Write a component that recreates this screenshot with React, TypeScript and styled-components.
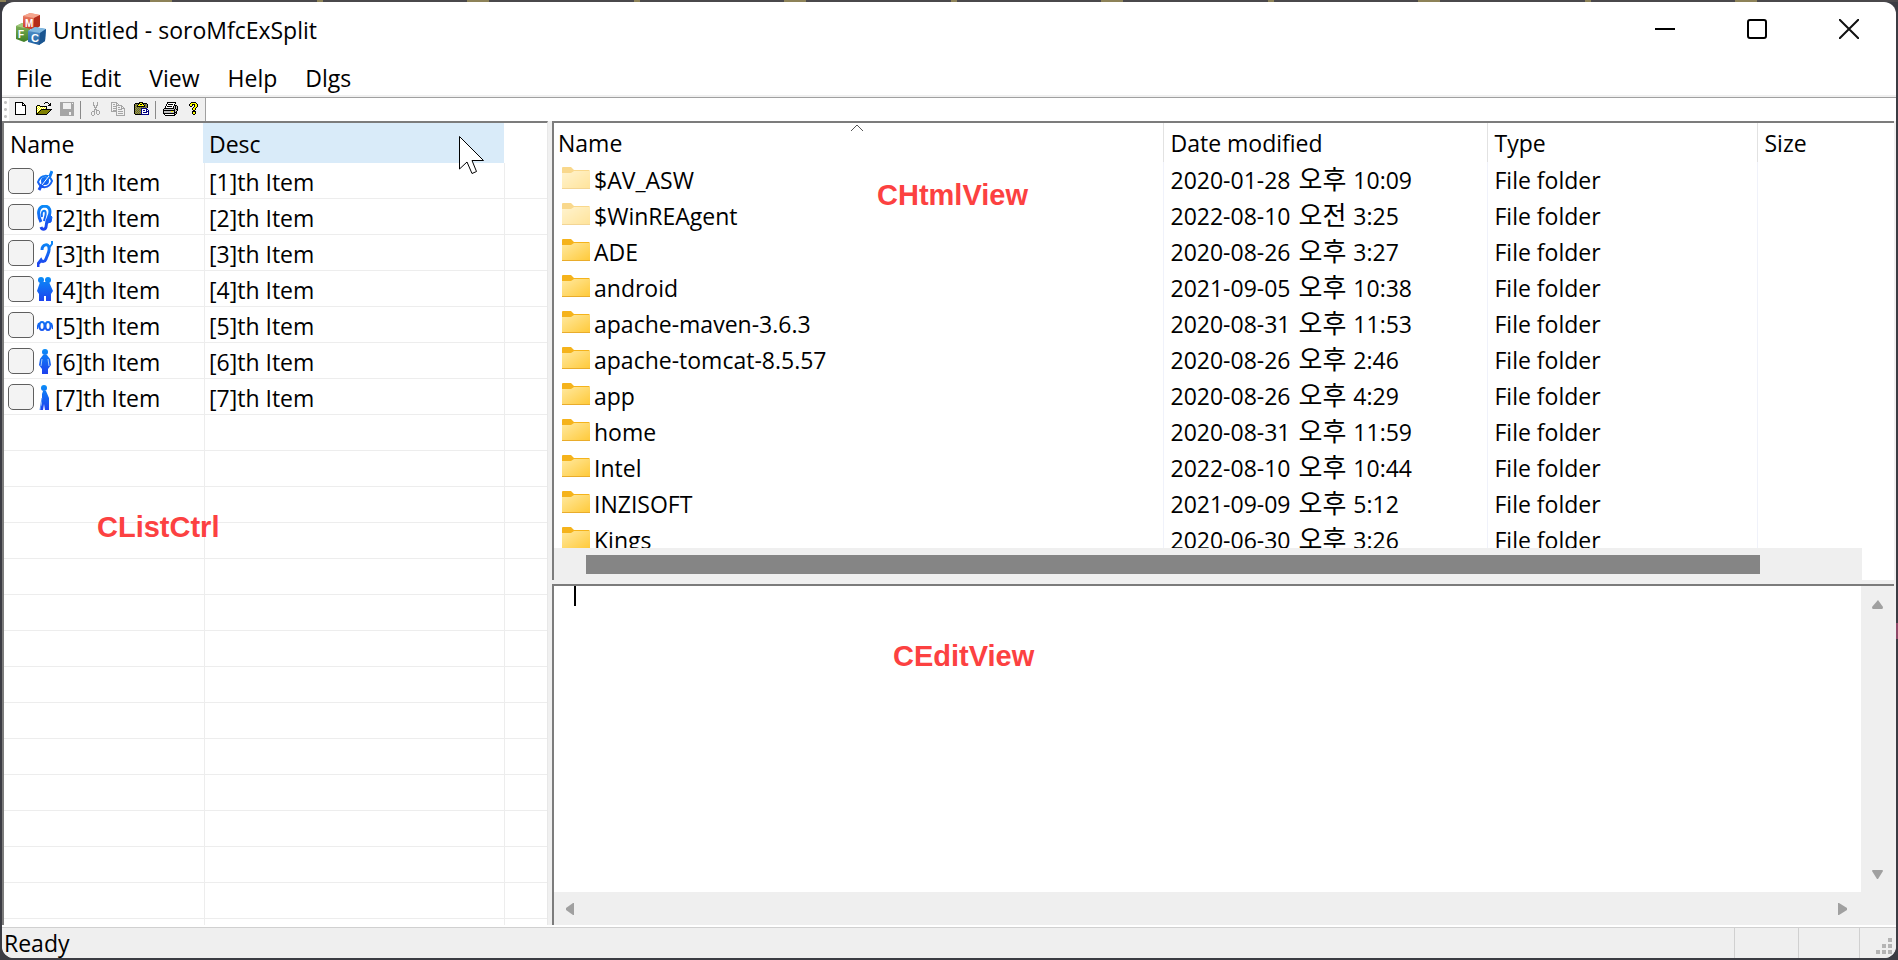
import React from "react";
import styled, { createGlobalStyle } from "styled-components";

const GlobalStyle = createGlobalStyle`
  *, *::before, *::after { box-sizing: border-box; }
  body {
    margin: 0;
    color: #000;
    font: 23px/32px "Open Sans", "Noto Sans CJK KR", sans-serif;
  }
  button, input, textarea { font: inherit; color: inherit; }
`;

/* ---------- window frame ---------- */

const Desktop = styled.div`
  display: flex;
  height: 100vh;
  min-height: 720px;
  padding: 2px;
  background:
    linear-gradient(#8d4a68, #8d4a68) 100% 66% / 2px 16px no-repeat,
    repeating-linear-gradient(90deg, #8d8258 0 6px, #4a484b 6px 150px, #8d8258 150px 172px, #4a484b 172px 317px) 0 0 / 100% 2px no-repeat,
    #3b3c43;
`;

const Window = styled.main`
  flex: 1;
  min-width: 0;
  display: flex;
  flex-direction: column;
  background: #fff;
  border-radius: 12px;
  overflow: hidden;
`;

const TitleBar = styled.header`
  display: flex;
  align-items: center;
  height: 56px;
  padding: 0 1px 0 11px;
`;

const Title = styled.h1`
  flex: 1;
  margin: 0 0 0 4px;
  font-size: 23px;
  font-weight: 400;
`;

const CaptionButton = styled.button`
  display: grid;
  place-items: center;
  width: 92px;
  height: 56px;
  padding: 0 0 2px;
  border: 0;
  background: transparent;
`;

const MenuBar = styled.nav`
  display: flex;
  height: 37px;
  padding: 3px 0 0;
`;

const MenuButton = styled.button`
  padding: 0 14px;
  border: 0;
  background: transparent;
`;

/* ---------- toolbar ---------- */

const ToolBar = styled.div`
  display: flex;
  height: 26px;
  border-top: 2px solid #f0f0f0;
  background: linear-gradient(#a0a0a0, #a0a0a0) 0 0 / 100% 1px no-repeat;
  padding-top: 1px;
`;

const Tools = styled.div`
  display: flex;
  align-items: center;
  border-right: 1px solid #a0a0a0;
  background: #f0f0f0;
`;

const Grip = styled.div`
  align-self: stretch;
  width: 7px;
  background: radial-gradient(circle, #c4c4c4 1px, #fff 2px) 0 1px / 7px 7px;
`;

const ToolButton = styled.button`
  display: grid;
  place-items: center;
  width: 23px;
  height: 22px;
  padding: 0 0 2px;
  border: 0;
  background: transparent;
`;

const ToolSeparator = styled.div`
  width: 1px;
  height: 18px;
  margin: 0 3px 0 2px;
  background: #8a8a8a;
`;

/* ---------- split panes ---------- */

const Split = styled.div`
  flex: 1;
  min-height: 0;
  display: grid;
  grid-template-columns: 546px minmax(0, 1fr);
  column-gap: 4px;
  background: #f0f0f0;
  padding-right: 2px;
`;

const SplitRows = styled.div`
  display: grid;
  grid-template-rows: 459px minmax(0, 1fr);
  row-gap: 4px;
  min-height: 0;
`;

const Pane = styled.section`
  position: relative;
  min-height: 0;
  overflow: hidden;
  background: #fff;
  border-top: 2px solid #7c7c7c;
  border-left: 2px solid #7c7c7c;
`;

const Callout = styled.strong<{ $x: number; $y: number }>`
  position: absolute;
  left: ${(p) => p.$x}px;
  top: ${(p) => p.$y}px;
  color: #fc4141;
  font: 700 29px/32px "Liberation Sans", Arial, sans-serif;
  pointer-events: none;
`;

const ListPane = styled(Pane)`
  display: flex;
  flex-direction: column;
  border-right: 1px solid #e8e8e8;
`;

const ListGrid = styled.div`
  flex: 1;
  background:
    linear-gradient(#ededed, #ededed) 200px 40px / 1px 100% no-repeat,
    linear-gradient(#ededed, #ededed) 500px 40px / 1px 100% no-repeat,
    repeating-linear-gradient(transparent 0 35px, #ededed 35px 36px) 0 40px / 100% 100% no-repeat;
`;

const ListTable = styled.table`
  width: 500px;
  table-layout: fixed;
  border-collapse: collapse;

  th, td { padding: 0; text-align: left; font-weight: 400; white-space: nowrap; }
`;

const ListHead = styled.th<{ $width: number; $hot?: boolean }>`
  width: ${(p) => p.$width}px;
  height: 40px;
  background: ${(p) => (p.$hot ? "#d9ebf9" : "transparent")};

  && { padding: 2px 0 0 6px; }
`;

const ListCell = styled.td`
  height: 36px;
  && { padding: 2px 0 0 6px; }
`;

const ItemLabel = styled.label`
  display: flex;
  align-items: center;
  height: 34px;
  margin-left: -2px;
`;

const Check = styled.input`
  appearance: none;
  width: 26px;
  height: 26px;
  margin: 0 3px 2px 0;
  border: 1px solid #5f5f5f;
  border-radius: 5px;
  background: #f3f3f3;
`;

const ItemText = styled.span`
  margin-left: 2px;
`;

const Pointer = styled.svg`
  position: absolute;
  left: 455px;
  top: 13px;
`;

/* ---------- folder view ---------- */

const FolderPane = styled(Pane)`
  display: flex;
  flex-direction: column;
`;

const FolderScroll = styled.div`
  flex: 1;
  min-height: 0;
  overflow: hidden;
`;

const FolderTable = styled.table`
  width: 100%;
  table-layout: fixed;
  border-collapse: collapse;

  th, td { padding: 0 0 0 7px; text-align: left; font-weight: 400; white-space: nowrap; }
  th { height: 39px; border-right: 1px solid #e2e2e2; }
  td { height: 36px; border-right: 1px solid #f0f2fa; }
  th:first-child { padding-left: 4px; }
  td:first-child { padding-left: 8px; }
  th:last-child, td:last-child { border-right: 0; }
`;

const HeadCell = styled.th<{ $width?: number }>`
  width: ${(p) => (p.$width ? `${p.$width}px` : "auto")};
`;

const FolderName = styled.span`
  display: flex;
  align-items: center;
  gap: 4px;

  svg { margin-bottom: 4px; }
`;

const Meridiem = styled.span`
  margin: 0 1px 0 2px;
  font-size: 26px;
  line-height: 24px;
`;

const SortMark = styled.svg`
  position: absolute;
  left: 296px;
  top: 1px;
`;

const HorizontalBar = styled.div`
  display: flex;
  align-items: center;
  height: 32px;
  margin-right: 32px;
  padding-left: 32px;
  background: #efefef;
`;

const Thumb = styled.div`
  width: 92%;
  height: 19px;
  background: #858585;
`;

/* ---------- edit view ---------- */

const EditPane = styled(Pane)`
  display: grid;
  grid-template-columns: minmax(0, 1fr) 33px;
  grid-template-rows: minmax(0, 1fr) 33px;
  background: #efefef;
`;

const Editor = styled.textarea`
  width: 100%;
  height: 100%;
  padding: 0 20px;
  border: 0;
  outline: 0;
  resize: none;
  background: #fff;
`;

const Caret = styled.span`
  position: absolute;
  left: 20px;
  top: 0;
  width: 2px;
  height: 20px;
  background: #000;
`;

const ScrollTrack = styled.div<{ $vertical?: boolean }>`
  display: flex;
  flex-direction: ${(p) => (p.$vertical ? "column" : "row")};
  justify-content: space-between;
  align-items: center;
  padding: ${(p) => (p.$vertical ? "14px 0 13px" : "0 14px 0 12px")};
`;

const ArrowButton = styled.button`
  display: block;
  padding: 0;
  border: 0;
  background: transparent;
  line-height: 0;
`;

/* ---------- status bar ---------- */

const StatusBar = styled.footer`
  display: flex;
  align-items: stretch;
  height: 33px;
  border-top: 2px solid #fff;
  background: #efefef;
  box-shadow: inset 0 1px #d0d0d0;
`;

const StatusText = styled.span`
  flex: 1;
  padding: 1px 0 0 2px;
  line-height: 30px;
`;

const Indicator = styled.span<{ $width: number }>`
  width: ${(p) => p.$width}px;
  margin-top: 1px;
  border-left: 1px solid #d0d0d0;
`;

const SizeGrip = styled.svg`
  align-self: flex-end;
  margin: 0 4px 4px 0;
`;

/* ---------- drawings ---------- */

const palette: Record<string, string> = {
  K: "#000",
  W: "#fff",
  Y: "#ffff00",
  O: "#808000",
  G: "#a5a5a5",
  D: "#808080",
  S: "#c0c0c0",
  N: "#000080",
};

const PixelIcon = ({ rows }: { rows: string[] }) => (
  <svg width={rows[0].length} height={rows.length} shapeRendering="crispEdges" aria-hidden="true">
    {rows.flatMap((row, y) =>
      [...row].map((c, x) =>
        palette[c] ? <rect key={`${x}-${y}`} x={x} y={y} width="1" height="1" fill={palette[c]} /> : null
      )
    )}
  </svg>
);

const icons = {
  New: [
    "KKKKKKKK...",
    "KWWWWWWKK..",
    "KWWWWWWKWK.",
    "KWWWWWWKKKK",
    "KWWWWWWWWWK",
    "KWWWWWWWWWK",
    "KWWWWWWWWWK",
    "KWWWWWWWWWK",
    "KWWWWWWWWWK",
    "KWWWWWWWWWK",
    "KWWWWWWWWWK",
    "KWWWWWWWWWK",
    "KKKKKKKKKKK",
  ],
  Open: [
    ".........KKK....",
    "........K...K.K.",
    ".............KK.",
    ".KKK........KKK.",
    "KYWYKKKKKKK.....",
    "KWYWYWYWYWK.....",
    "KYWYWYWYWYK.....",
    "KWYWYKKKKKKKKKKK",
    "KYWYKOOOOOOOOOK.",
    "KWYKOOOOOOOOOK..",
    "KYKOOOOOOOOOK...",
    "KKOOOOOOOOOK....",
    "KKKKKKKKKKK.....",
  ],
  Save: [
    "GGGGGGGGGGGGGG",
    "GGG........G.G",
    "GGG........GGG",
    "GGG........GGG",
    "GGG........GGG",
    "GGG........GGG",
    "GGG........GGG",
    "GGGGGGGGGGGGGG",
    "GGGGGGGGGGGGGG",
    "GGGGGGGGGGGGGG",
    "GGGGGGGGG..GGG",
    "GGGGGGGGG..GGG",
    "GGGGGGGGG..GGG",
    "GGGGGGGGGGGGGG",
  ],
  Cut: [
    "..G...G..",
    "..G...G..",
    "..G...G..",
    "..GG.GG..",
    "...G.G...",
    "...GGG...",
    "....G....",
    "...GGG...",
    "...G.GGG.",
    ".GGG.G..G",
    "G..G.G..G",
    "G..G.G..G",
    "G..G..GG.",
    ".GG......",
  ],
  Copy: [
    "GGGGGG.........",
    "G....GG........",
    "G.GG.G.G.......",
    "G....GGGGGG....",
    "G.GGGG....GG...",
    "G....G.GG.G.G..",
    "G.GGGG....GGGG.",
    "G....G.GGGG..G.",
    "G.GGGG.......G.",
    "GGGGGG.GGGGG.G.",
    ".....G.......G.",
    ".....G.GGGGG.G.",
    ".....G.......G.",
    ".....GGGGGGGGG.",
  ],
  Paste: [
    ".....KKKK......",
    ".KKKKKYYKKKKK..",
    "KDODKYKKYKDODK.",
    "KODKYYYYYYKODK.",
    "KDOKKKKKKKKDOK.",
    "KODODODODODODK.",
    "KDODODONNNNNN..",
    "KODODODNWWWWNN.",
    "KDODODONWNNWNWN",
    "KODODODNWWWWNNN",
    "KDODODONWNNNNWN",
    "KODODODNWWWWWWN",
    ".KKKKKKNNNNNNNN",
  ],
  Print: [
    "....KKKKKKKKK...",
    "....KWWWWWWWK...",
    "...KWKKKKKWK....",
    "...KWWWWWWWKKK..",
    "..KWKKKKKWKSKSK.",
    "..KWWWWWWWKSKSK.",
    ".KKKKKKKKKKSKSK.",
    "KSSSSSSSSSSKSKK.",
    "KKKKKKKKKKKKSSK.",
    "KSSSSSSSYYSKSK..",
    "KSSSSSSSSSSKKK..",
    "KKKKKKKKKKKKSK..",
    ".KWWWWWWWWWKK...",
    "..KKKKKKKKKK....",
  ],
  Help: [
    "..KKKKK...",
    ".KYYYYYK..",
    "KYYKKKYYK.",
    "KYYK.KYYK.",
    ".KK..KYYK.",
    "....KYYK..",
    "...KYYK...",
    "...KYYK...",
    "....KK....",
    "...KKKK...",
    "...KYYK...",
    "...KYYK...",
    "....KK....",
  ],
};

const AppIcon = () => (
  <svg width="36" height="34" viewBox="0 0 36 34" aria-hidden="true">
    <defs>
      <linearGradient id="red" x2="0" y2="1"><stop stopColor="#ef8b72" /><stop offset="1" stopColor="#c8321d" /></linearGradient>
      <linearGradient id="green" x2="0" y2="1"><stop stopColor="#86b65d" /><stop offset="1" stopColor="#3f7f26" /></linearGradient>
      <linearGradient id="blue" x2="0" y2="1"><stop stopColor="#5b9ad0" /><stop offset="1" stopColor="#1f5f9f" /></linearGradient>
    </defs>
    <path d="M3 13 9 10 17 12 17 26 11 29 3 26Z" fill="url(#green)" />
    <path d="M3 13 9 10 17 12 11 15Z" fill="#a4cb80" />
    <path d="M10 3 17 0 27 2 27 13 21 17 10 14Z" fill="url(#red)" />
    <path d="M10 3 17 0 27 2 21 5Z" fill="#f5a58d" />
    <path d="M21 5 27 2 27 13 21 17Z" fill="#b32c1a" />
    <path d="M15 18 22 14 33 16 32 28 26 32 15 29Z" fill="url(#blue)" />
    <path d="M15 18 22 14 33 16 27 20Z" fill="#82b8e0" />
    <path d="M27 20 33 16 32 28 26 32Z" fill="#1a5590" />
    <g fill="#fff" fontFamily="Liberation Sans, Arial, sans-serif" fontWeight="700">
      <text x="12" y="14" fontSize="10">M</text>
      <text x="5" y="25" fontSize="10">F</text>
      <text x="18" y="29" fontSize="11">C</text>
    </g>
  </svg>
);

const symbols: React.ReactNode[] = [
  <g key="0" fill="none" strokeWidth="2">
    <path d="M1 13C4 5 12 5 15 12C12 20 4 20 1 13Z" />
    <circle cx="8" cy="12" r="3" fill="url(#ink)" />
    <path d="M15 2 13 7 4 17 2 21" strokeWidth="3" />
    <path d="M12 7 5 16" stroke="#fff" strokeWidth="1" />
  </g>,
  <g key="1" fill="none">
    <path d="M4 17C0 9 1 2 7 1C13 1 14 6 12 11C10 15 9 17 9 22C8 25 5 25 4 22" strokeWidth="3" />
    <path d="M5 12C4 7 6 5 8 6C10 8 8 11 7 16" strokeWidth="2" />
    <path d="M12 9 15 12 14 17 11 18Z" fill="url(#ink)" strokeWidth="1" />
  </g>,
  <g key="2" fill="none">
    <path d="M15 0V3L12 7" strokeWidth="2" />
    <path d="M5 9C5 3 12 2 12 7C13 11 10 14 9 18C8 21 5 21 4 19L1 23V26" strokeWidth="3" />
  </g>,
  <g key="3" stroke="none">
    <circle cx="4" cy="3" r="3" /><circle cx="11" cy="3" r="3" />
    <path d="M3 5H12L16 14 14 17V24H9V19H7V24H2V17L0 14Z" />
  </g>,
  <g key="4" fill="none" strokeWidth="2">
    <ellipse cx="5" cy="13" rx="2.5" ry="4" /><ellipse cx="11" cy="13" rx="2.5" ry="4" />
    <path d="M0 16 2 10M16 16 14 10" />
  </g>,
  <g key="5" stroke="none">
    <circle cx="8" cy="3" r="3" />
    <path d="M6 6H10L13 10 14 16 11 20V25H5V20L2 16 3 10Z" />
    <path d="M5 10 4 17M11 10 12 17" stroke="#a9cdfb" strokeWidth="1" />
  </g>,
  <g key="6" stroke="none">
    <circle cx="7" cy="3" r="3" />
    <path d="M6 6H9L12 13V25H8L7 19 6 25H3L5 18 5 9Z" />
    <path d="M5 13 3 25" stroke="#4d8df7" strokeWidth="1" />
  </g>,
];

const ItemIcon = ({ index }: { index: number }) => (
  <svg width="16" height="26" viewBox="0 0 16 26" stroke="url(#ink)" fill="url(#ink)" aria-hidden="true">
    <defs>
      <linearGradient id="ink" gradientUnits="userSpaceOnUse" x1="0" x2="0" y1="0" y2="24">
        <stop stopColor="#0a8df8" />
        <stop offset="1" stopColor="#1d43ee" />
      </linearGradient>
    </defs>
    {symbols[index]}
  </svg>
);

const FolderIcon = ({ faded }: { faded: boolean }) => (
  <svg width="28" height="22" viewBox="0 0 28 22" opacity={faded ? 0.5 : 1} aria-hidden="true">
    <defs>
      <linearGradient id="folder" x2="1" y2="1">
        <stop stopColor="#ffe9a0" />
        <stop offset="1" stopColor="#ffc938" />
      </linearGradient>
    </defs>
    <path d="M0 1Q0 0 1 0H9L12 3H27L28 4V8H0Z" fill="#f5b31b" />
    <path d="M0 6H9L12 4H28V22H0Z" fill="url(#folder)" />
    <path d="M0 21.5H28" stroke="#e9ac2b" />
  </svg>
);

const arrows = {
  up: "M6 0 11 7Q11 9 10 9H1Q0 9 0 7Z",
  down: "M0 1Q0 0 1 0H10Q11 0 11 1L6 9H5Z",
  left: "M0 5 7 0H8V12H7L0 7Z",
  right: "M0 0H1L9 5V7L1 12H0Z",
};

const Arrow = ({ dir }: { dir: keyof typeof arrows }) => (
  <ArrowButton aria-label={`Scroll ${dir}`}>
    <svg
      width={dir === "left" || dir === "right" ? 9 : 11}
      height={dir === "left" || dir === "right" ? 12 : 9}
      fill="#a0a0a0"
    >
      <path d={arrows[dir]} />
    </svg>
  </ArrowButton>
);

/* ---------- data ---------- */

const items = [1, 2, 3, 4, 5, 6, 7].map((n) => `[${n}]th Item`);

const folders = [
  ["$AV_ASW", "2020-01-28", "오후", "10:09"],
  ["$WinREAgent", "2022-08-10", "오전", "3:25"],
  ["ADE", "2020-08-26", "오후", "3:27"],
  ["android", "2021-09-05", "오후", "10:38"],
  ["apache-maven-3.6.3", "2020-08-31", "오후", "11:53"],
  ["apache-tomcat-8.5.57", "2020-08-26", "오후", "2:46"],
  ["app", "2020-08-26", "오후", "4:29"],
  ["home", "2020-08-31", "오후", "11:59"],
  ["Intel", "2022-08-10", "오후", "10:44"],
  ["INZISOFT", "2021-09-09", "오후", "5:12"],
  ["Kings", "2020-06-30", "오후", "3:26"],
];

const toolGroups: (keyof typeof icons)[][] = [
  ["New", "Open", "Save"],
  ["Cut", "Copy", "Paste"],
  ["Print", "Help"],
];

export default function App() {
  return (
    <>
      <GlobalStyle />
      <Desktop>
        <Window>
          <TitleBar>
            <AppIcon />
            <Title>Untitled - soroMfcExSplit</Title>
            <CaptionButton aria-label="Minimize">
              <svg width="20" height="20"><path d="M0 10H20" stroke="#000" strokeWidth="2" /></svg>
            </CaptionButton>
            <CaptionButton aria-label="Maximize">
              <svg width="20" height="20"><rect x="1" y="1" width="18" height="18" rx="2" fill="none" stroke="#000" strokeWidth="2" /></svg>
            </CaptionButton>
            <CaptionButton aria-label="Close">
              <svg width="20" height="20"><path d="M0 0 20 20M20 0 0 20" stroke="#111" strokeWidth="2" /></svg>
            </CaptionButton>
          </TitleBar>

          <MenuBar>
            {["File", "Edit", "View", "Help", "Dlgs"].map((m) => (
              <MenuButton key={m}>{m}</MenuButton>
            ))}
          </MenuBar>

          <ToolBar>
            <Tools role="toolbar">
              <Grip />
              {toolGroups.map((group, i) => (
                <React.Fragment key={i}>
                  {i > 0 && <ToolSeparator />}
                  {group.map((name) => (
                    <ToolButton key={name} aria-label={name}>
                      <PixelIcon rows={icons[name]} />
                    </ToolButton>
                  ))}
                </React.Fragment>
              ))}
            </Tools>
          </ToolBar>

          <Split>
            <ListPane>
              <ListGrid>
                <ListTable>
                  <thead>
                    <tr>
                      <ListHead $width={199}>Name</ListHead>
                      <ListHead $width={301} $hot>Desc</ListHead>
                    </tr>
                  </thead>
                  <tbody>
                    {items.map((item, i) => (
                      <tr key={item}>
                        <ListCell>
                          <ItemLabel>
                            <Check type="checkbox" />
                            <ItemIcon index={i} />
                            <ItemText>{item}</ItemText>
                          </ItemLabel>
                        </ListCell>
                        <ListCell>{item}</ListCell>
                      </tr>
                    ))}
                  </tbody>
                </ListTable>
              </ListGrid>
              <Callout $x={93} $y={388}>CListCtrl</Callout>
              <Pointer width="27" height="40" viewBox="0 0 27 40" fill="#fff" stroke="#000">
                <path d="M.5 .5V33L8 26L13 37.5L17.500 35.500L13 24.500H24.500Z" />
              </Pointer>
            </ListPane>

            <SplitRows>
              <FolderPane>
                <FolderScroll>
                  <FolderTable>
                    <thead>
                      <tr>
                        <HeadCell $width={609}>Name</HeadCell>
                        <HeadCell $width={324}>Date modified</HeadCell>
                        <HeadCell $width={270}>Type</HeadCell>
                        <HeadCell>Size</HeadCell>
                      </tr>
                    </thead>
                    <tbody>
                      {folders.map(([name, date, meridiem, time]) => (
                        <tr key={name}>
                          <td>
                            <FolderName>
                              <FolderIcon faded={name.startsWith("$")} />
                              {name}
                            </FolderName>
                          </td>
                          <td>
                            {date} <Meridiem>{meridiem}</Meridiem> {time}
                          </td>
                          <td>File folder</td>
                          <td />
                        </tr>
                      ))}
                    </tbody>
                  </FolderTable>
                </FolderScroll>
                <HorizontalBar>
                  <Thumb />
                </HorizontalBar>
                <SortMark width="14" height="8" fill="none" stroke="#555">
                  <path d="M1 7 7 1 13 7" />
                </SortMark>
                <Callout $x={323} $y={56}>CHtmlView</Callout>
              </FolderPane>

              <EditPane>
                <Editor aria-label="Edit view" />
                <ScrollTrack $vertical>
                  <Arrow dir="up" />
                  <Arrow dir="down" />
                </ScrollTrack>
                <ScrollTrack>
                  <Arrow dir="left" />
                  <Arrow dir="right" />
                </ScrollTrack>
                <Caret />
                <Callout $x={339} $y={54}>CEditView</Callout>
              </EditPane>
            </SplitRows>
          </Split>

          <StatusBar>
            <StatusText>Ready</StatusText>
            <Indicator $width={64} />
            <Indicator $width={61} />
            <Indicator $width={17} />
            <SizeGrip width="16" height="16" fill="#b4b4b4">
              <path d="M12 0h4v4h-4zM6 6h4v4H6zM12 6h4v4h-4zM0 12h4v4H0zM6 12h4v4H6zM12 12h4v4h-4z" />
            </SizeGrip>
          </StatusBar>
        </Window>
      </Desktop>
    </>
  );
}
